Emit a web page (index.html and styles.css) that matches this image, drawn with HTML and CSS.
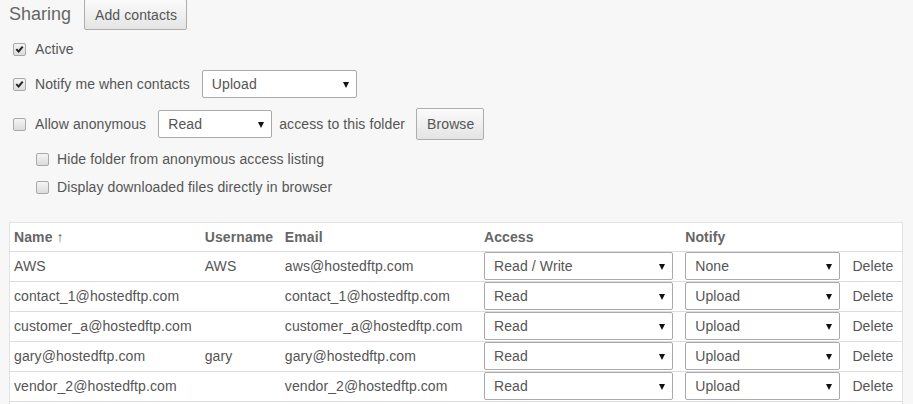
FILE: index.html
```html
<!DOCTYPE html>
<html>
<head>
<meta charset="utf-8">
<link rel="stylesheet" href="styles.css">
</head>
<body>
<div class="page">
  <div class="row head">
    <span class="title">Sharing</span>
    <span class="btn add">Add contacts</span>
  </div>
  <div class="row r-active">
    <span class="cb on"><svg viewBox="0 0 12 12" width="12" height="12"><path d="M2.5 6.2 L5 8.7 L9.5 3.3" fill="none" stroke="#222" stroke-width="2.1"/></svg></span>
    <span class="lbl">Active</span>
  </div>
  <div class="row r-notify">
    <span class="cb on"><svg viewBox="0 0 12 12" width="12" height="12"><path d="M2.5 6.2 L5 8.7 L9.5 3.3" fill="none" stroke="#222" stroke-width="2.1"/></svg></span>
    <span class="lbl">Notify me when contacts</span>
    <span class="sel sel-notify">Upload<i class="arr"></i></span>
  </div>
  <div class="row r-allow">
    <span class="cb"></span>
    <span class="lbl">Allow anonymous</span>
    <span class="sel sel-anon">Read<i class="arr"></i></span>
    <span class="lbl2">access to this folder</span>
    <span class="btn browse">Browse</span>
  </div>
  <div class="row r-hide sub">
    <span class="cb"></span>
    <span class="lbl">Hide folder from anonymous access listing</span>
  </div>
  <div class="row r-display sub">
    <span class="cb"></span>
    <span class="lbl">Display downloaded files directly in browser</span>
  </div>

  <table class="contacts">
    <colgroup>
      <col class="c-name"><col class="c-user"><col class="c-email"><col class="c-access"><col class="c-notify"><col class="c-del">
    </colgroup>
    <thead>
      <tr><th>Name ↑</th><th>Username</th><th>Email</th><th>Access</th><th>Notify</th><th></th></tr>
    </thead>
    <tbody>
      <tr><td>AWS</td><td>AWS</td><td>aws@hostedftp.com</td><td><span class="sel sel-acc">Read / Write<i class="arr"></i></span></td><td><span class="sel sel-not">None<i class="arr"></i></span></td><td>Delete</td></tr>
      <tr><td>contact_1@hostedftp.com</td><td></td><td>contact_1@hostedftp.com</td><td><span class="sel sel-acc">Read<i class="arr"></i></span></td><td><span class="sel sel-not">Upload<i class="arr"></i></span></td><td>Delete</td></tr>
      <tr><td>customer_a@hostedftp.com</td><td></td><td>customer_a@hostedftp.com</td><td><span class="sel sel-acc">Read<i class="arr"></i></span></td><td><span class="sel sel-not">Upload<i class="arr"></i></span></td><td>Delete</td></tr>
      <tr><td>gary@hostedftp.com</td><td>gary</td><td>gary@hostedftp.com</td><td><span class="sel sel-acc">Read<i class="arr"></i></span></td><td><span class="sel sel-not">Upload<i class="arr"></i></span></td><td>Delete</td></tr>
      <tr><td>vendor_2@hostedftp.com</td><td></td><td>vendor_2@hostedftp.com</td><td><span class="sel sel-acc">Read<i class="arr"></i></span></td><td><span class="sel sel-not">Upload<i class="arr"></i></span></td><td>Delete</td></tr>
      <tr class="last"><td></td><td></td><td></td><td></td><td></td><td></td></tr>
    </tbody>
  </table>
</div>
</body>
</html>
```

FILE: styles.css
```css
html, body {
  margin: 0;
  padding: 0;
  background: #f7f7f7;
}
body {
  font-family: "Liberation Sans", Arial, sans-serif;
  font-size: 14px;
  letter-spacing: 0.1px;
  color: #555;
  overflow: hidden;
}
.page {
  padding-left: 9px;
}
.row {
  display: flex;
  align-items: center;
  white-space: nowrap;
}
.head { height: 30px; }
.title {
  font-size: 18px;
  letter-spacing: 0;
  color: #666;
  margin-right: 13px;
  margin-top: -1px;
}
.btn {
  display: inline-flex;
  align-items: center;
  box-sizing: border-box;
  border: 1px solid #adadad;
  border-radius: 2px;
  background: linear-gradient(#fbfbfb, #e4e4e4);
  color: #555;
  white-space: nowrap;
}
.add {
  height: 31px;
  margin-top: -1px;
  padding: 0 9px 0 10px;
}
.browse {
  height: 32px;
  padding: 0 9px 0 10px;
  margin-left: 11px;
}
.r-active { height: 38px; }
.r-notify { height: 32px; }
.r-allow { height: 48px; }
.r-hide { height: 22px; }
.r-display { height: 34px; }
.sub { padding-left: 23px; }
.cb {
  box-sizing: border-box;
  width: 13px;
  height: 13px;
  margin-left: 4px;
  margin-right: 9px;
  border: 1px solid #a9a9a9;
  border-radius: 2px;
  background: linear-gradient(#f4f4f4, #dcdcdc);
  display: inline-flex;
  align-items: center;
  justify-content: center;
  flex: none;
}
.cb svg { display: block; }
.sub .cb { margin-right: 8px; }
.lbl { color: #555; }
.lbl2 { margin-left: 7px; }
.sel {
  position: relative;
  display: inline-flex;
  align-items: center;
  box-sizing: border-box;
  height: 28px;
  border: 1px solid #aaa;
  border-radius: 2px;
  background: #fff;
  padding-left: 9px;
  color: #555;
}
.arr {
  position: absolute;
  right: 7px;
  top: 11px;
  width: 0;
  height: 0;
  border-left: 3.5px solid transparent;
  border-right: 3.5px solid transparent;
  border-top: 6px solid #111;
}
.sel-notify { width: 155px; margin-left: 12px; }
.sel-anon { width: 114px; margin-left: 12px; }

.contacts {
  margin-top: 18px;
  border-collapse: collapse;
  table-layout: fixed;
  width: 894px;
  background: #fff;
  border: 1px solid #e3e3e3;
}
.c-name { width: 191px; }
.c-user { width: 80px; }
.c-email { width: 199px; }
.c-access { width: 201px; }
.c-notify { width: 167px; }
.c-del { width: 54px; }
.contacts th, .contacts td {
  padding: 0 4px;
  text-align: left;
  white-space: nowrap;
  overflow: hidden;
  border-bottom: 1px solid #ddd;
}
.contacts th {
  height: 28px;
  font-weight: bold;
  color: #666;
}
.contacts td {
  height: 28px;
  padding-bottom: 1px;
  vertical-align: middle;
}
.contacts td .sel { vertical-align: middle; }
.sel-acc { width: 189px; }
.sel-not { width: 155px; }
.contacts tr.last td { border-bottom: none; height: 10px; padding-bottom: 0; }
```
